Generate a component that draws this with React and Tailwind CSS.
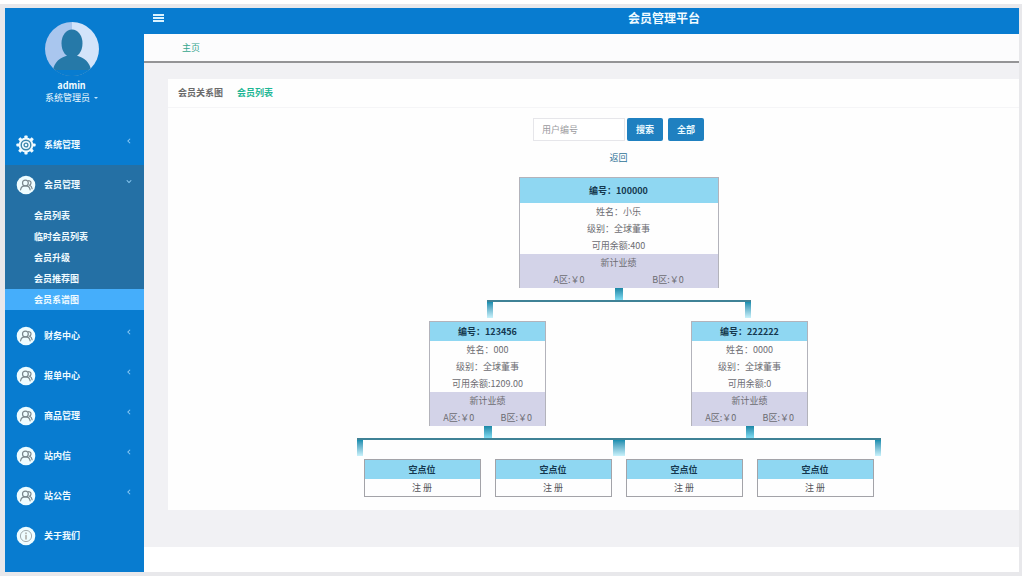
import { useState } from 'react';

const MENU = [
  { name: '系统管理', icon: 'gear', arrow: true },
  {
    name: '会员管理',
    icon: 'users',
    arrow: true,
    children: ['会员列表', '临时会员列表', '会员升级', '会员推荐图', '会员系谱图'],
  },
  { name: '财务中心', icon: 'users', arrow: true },
  { name: '报单中心', icon: 'users', arrow: true },
  { name: '商品管理', icon: 'users', arrow: true },
  { name: '站内信', icon: 'users', arrow: true },
  { name: '站公告', icon: 'users', arrow: true },
  { name: '关于我们', icon: 'info', arrow: false },
];

const ROOT = { id: '100000', name: '小乐', level: '全球董事', balance: '400' };

const CHILDREN = [
  { id: '123456', name: '000', level: '全球董事', balance: '1209.00' },
  { id: '222222', name: '0000', level: '全球董事', balance: '0' },
];

function GearIcon() {
  return (
    <svg viewBox="0 0 20 20" className="size-5 shrink-0">
      {[0, 45, 90, 135].map((a) => (
        <rect key={a} x="8.4" y="0.4" width="3.2" height="19.2" rx="0.8" fill="#f0fbff" transform={`rotate(${a} 10 10)`} />
      ))}
      <circle cx="10" cy="10" r="7.4" fill="#f0fbff" />
      <circle cx="10" cy="10" r="4.8" fill="none" stroke="#3b87ad" strokeWidth="1.4" />
      <circle cx="10" cy="10" r="1.9" fill="none" stroke="#3b87ad" strokeWidth="1.3" />
    </svg>
  );
}

function UsersIcon() {
  return (
    <svg viewBox="0 0 20 20" className="size-5 shrink-0">
      <circle cx="10" cy="10" r="9.3" fill="#eefcff" />
      <g fill="none" stroke="#7b888e" strokeWidth="1.2" strokeLinecap="round">
        <circle cx="9.4" cy="8" r="2.9" />
        <path d="M4.6 14.8c.3-2.500 1.800-3.900 4.800-3.900s4.400 1.400 4.700 3.900" />
        <path d="M12.600 5.600c2 .2 2.700 1.500 2.300 2.900-.2.800-.7 1.400-1.300 1.800 1.500.6 2.300 1.700 2.500 3.400" />
      </g>
    </svg>
  );
}

function InfoIcon() {
  return (
    <svg viewBox="0 0 20 20" className="size-5 shrink-0">
      <circle cx="10" cy="10" r="9.3" fill="#eefcff" />
      <circle cx="10" cy="10" r="5.6" fill="none" stroke="#a3adb0" strokeWidth="1" />
      <path d="M10 7v.6M10 9.400v3.600" stroke="#a3a09a" strokeWidth="1.4" strokeLinecap="round" />
    </svg>
  );
}

function Avatar() {
  return (
    <svg viewBox="0 0 54 54" className="size-[54px]">
      <defs>
        <clipPath id="face">
          <circle cx="27" cy="27" r="27" />
        </clipPath>
      </defs>
      <g clipPath="url(#face)">
        <rect width="27" height="54" fill="#a9c6ee" />
        <rect x="27" width="27" height="54" fill="#d3e4fa" />
        <ellipse cx="27" cy="21.500" rx="10.500" ry="14" fill="#2679a8" />
        <path d="M7 54c1-12 5-17 14-20h12c9 3 13 8 14 20z" fill="#2679a8" />
        <path d="M0 48h54v6H0z" fill="#087cd0" />
      </g>
    </svg>
  );
}

const ICONS = { gear: GearIcon, users: UsersIcon, info: InfoIcon };

function MenuRow({ item, open, onClick }) {
  const Icon = ICONS[item.icon];
  return (
    <button type="button" onClick={onClick} className="flex h-10 w-full items-center pl-[11px] pr-3 text-left font-bold">
      <Icon />
      <span className="ml-2 flex-1">{item.name}</span>
      {item.arrow && (
        <svg viewBox="0 0 8 8" className="mb-2 size-1.5" fill="none" stroke="#8ccbf5" strokeWidth="1.4">
          <path d={open ? 'M1 3l3 3 3-3' : 'M5.500 1l-3 3 3 3'} />
        </svg>
      )}
    </button>
  );
}

function Sidebar() {
  const [open, setOpen] = useState('会员管理');
  const [current, setCurrent] = useState('会员系谱图');

  return (
    <aside className="w-[139px] shrink-0 bg-[#087cd0] pb-4 text-[9px] text-[#f0fbff]">
      <div className="flex h-[117px] flex-col items-center pt-[14px] pr-1.5">
        <Avatar />
        <p className="mt-1 text-[9px] leading-3 font-bold">admin</p>
        <button type="button" className="flex items-center gap-1 leading-3">
          系统管理员
          <span className="border-x-2 border-t-2 border-x-transparent border-t-[#bfe6ff]" />
        </button>
      </div>
      <nav>
        {MENU.map((item) => {
          const isOpen = open === item.name && item.children;
          return (
            <div key={item.name} className={isOpen ? 'mb-1.5 bg-[#2470a5]' : ''}>
              <MenuRow item={item} open={isOpen} onClick={() => setOpen(isOpen ? '' : item.name)} />
              {isOpen && (
                <ul>
                  {item.children.map((sub) => (
                    <li key={sub}>
                      <a
                        href="#"
                        onClick={() => setCurrent(sub)}
                        className={`block pl-[29px] leading-[21px] font-bold ${current === sub ? 'bg-[#45aefb]' : ''}`}
                      >
                        {sub}
                      </a>
                    </li>
                  ))}
                </ul>
              )}
            </div>
          );
        })}
      </nav>
    </aside>
  );
}

function MemberCard({ member, big }) {
  return (
    <div
      className={`border-x border-t border-[#b3b3bb] text-center text-[9px] leading-[17px] text-[#6c6c72] ${big ? 'w-[200px]' : 'w-[117px]'}`}
    >
      <h3 className={`bg-[#8fd7f2] font-bold text-[#15384f] ${big ? 'py-1' : 'py-px'}`}>编号：{member.id}</h3>
      <p>姓名：{member.name}</p>
      <p>级别：{member.level}</p>
      <p>可用余额:{member.balance}</p>
      <div className="bg-[#d3d3e8]">
        <p>新计业绩</p>
        <div className="grid grid-cols-2">
          <span>A区:￥0</span>
          <span>B区:￥0</span>
        </div>
      </div>
    </div>
  );
}

function EmptyCard() {
  return (
    <div className="w-[117px] border border-[#a3a3a8] text-center text-[9px] leading-[17px]">
      <h3 className="bg-[#8fd7f2] py-px font-bold text-[#15384f]">空点位</h3>
      <a href="#" className="block text-[#55555a]">
        注 册
      </a>
    </div>
  );
}

// 连接线：上面的短柄 + 横线 + 两端下垂
function Branch({ className }) {
  return (
    <div className={`flex flex-col items-center ${className}`}>
      <span className="h-3 w-2 bg-gradient-to-b from-[#1787a6] to-[#7fdcf2]" />
      <div className="flex w-full justify-between border-t-2 border-[#3f8296]">
        <span className="h-4 w-1.5 bg-gradient-to-b from-[#128fb0] to-[#c9f2fb]" />
        <span className="h-4 w-1.5 bg-gradient-to-b from-[#128fb0] to-[#c9f2fb]" />
      </div>
    </div>
  );
}

function Tree() {
  return (
    <div className="flex flex-col items-center">
      <MemberCard member={ROOT} big />
      <Branch className="w-[264px]" />
      <div className="mt-[3px] flex">
        {CHILDREN.map((m) => (
          <div key={m.id} className="flex w-[262px] flex-col items-center">
            <MemberCard member={m} />
            <Branch className="w-full" />
            <div className="mt-[3px] flex gap-3.5">
              <EmptyCard />
              <EmptyCard />
            </div>
          </div>
        ))}
      </div>
    </div>
  );
}

export default function App() {
  const [keyword, setKeyword] = useState('');

  return (
    <div className="min-h-screen bg-white pt-1 pr-0.5 pb-2.5 font-['Noto_Sans_CJK_SC',sans-serif]">
      <div className="flex border-t-4 border-r-3 border-b-4 border-l-5 border-[#e8e8eb]">
        <Sidebar />
        <div className="flex min-w-0 flex-1 flex-col bg-white">
          <header className="flex h-[26px] shrink-0 items-center bg-[#087cd0] pl-[9px] text-[#f0fbff]">
            <button type="button" aria-label="菜单" className="-mt-1.5 flex w-[11px] flex-col gap-px">
              <span className="h-0.5 bg-[#d9f3ff]" />
              <span className="h-0.5 bg-[#d9f3ff]" />
              <span className="h-0.5 bg-[#d9f3ff]" />
            </button>
            <h1 className="mb-1.5 flex-1 pl-[145px] text-center text-xs font-bold">会员管理平台</h1>
          </header>
          <div className="flex h-[29px] shrink-0 items-center border-b-2 border-[#949496] bg-[#fcfcfd] pl-[38px] text-[9px]">
            <a href="#" className="text-[#35a68d]">主页</a>
          </div>

          <main className="flex-1 bg-[#f1f1f4] pt-4 pb-[37px] pl-6">
            <section className="bg-[#fefefe] pb-[13px]">
              <div className="flex h-[29px] items-center gap-3.5 border-b border-[#f5f5f7] pl-2.5 text-[9px] font-bold">
                <a href="#" className="text-[#6a6a6a]">会员关系图</a>
                <a href="#" className="text-[#1fb795]">会员列表</a>
              </div>

              <div className="pt-2.5 pl-[50px]">
                <form className="flex justify-center text-[9px]" onSubmit={(e) => e.preventDefault()}>
                  <input
                    type="text"
                    aria-label="用户编号"
                    placeholder="用户编号"
                    value={keyword}
                    onChange={(e) => setKeyword(e.target.value)}
                    className="h-[23px] w-[92px] border border-[#e6e6ea] bg-white px-2 placeholder:text-[#9a9a9e]"
                  />
                  <button type="submit" className="ml-0.5 h-[23px] w-9 rounded-xs bg-[#1f80c0] font-bold text-[#eafaff]">
                    搜索
                  </button>
                  <button type="button" className="ml-[5px] h-[23px] w-9 rounded-xs bg-[#1f80c0] font-bold text-[#eafaff]">
                    全部
                  </button>
                </form>
                <p className="mt-2 mb-[11px] text-center text-[9px] leading-[17px]">
                  <a href="#" className="text-[#2e7296]">返回</a>
                </p>
                <Tree />
              </div>
            </section>
          </main>
          <footer className="h-[25px] shrink-0 bg-white" />
        </div>
      </div>
    </div>
  );
}
